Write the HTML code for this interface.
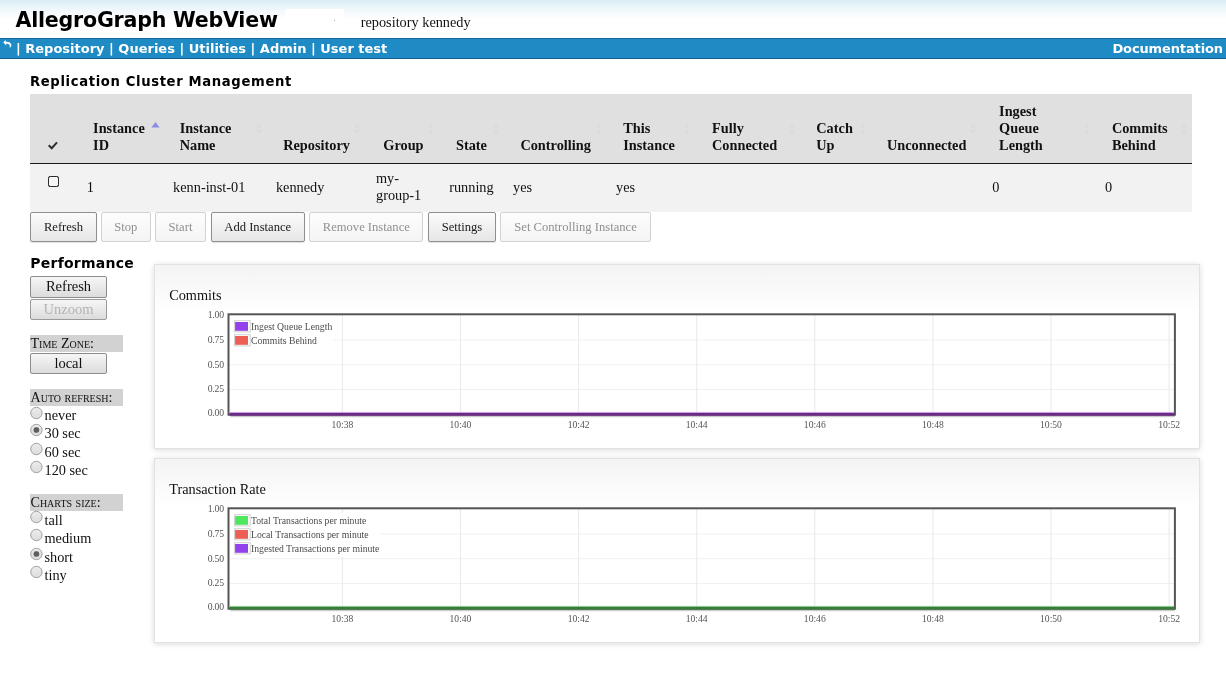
<!DOCTYPE html>
<html>
<head>
<meta charset="utf-8">
<title>AllegroGraph WebView</title>
<style>
html,body{margin:0;padding:0;}
body{width:1226px;height:680px;overflow:hidden;background:#fff;position:relative;font-family:"Liberation Serif","DejaVu Serif",serif;color:#111;}
div,span{box-sizing:border-box;}
.t{position:absolute;white-space:nowrap;}
#wrap{position:absolute;left:0;top:0;width:1226px;height:680px;will-change:transform;}
.a{position:absolute;}
.sn{font-family:"DejaVu Sans","Liberation Sans",sans-serif;}
#hdr{left:0;top:0;width:1226px;height:38px;background:linear-gradient(#d9ecf5 0,#f0f7fb 9px,#fff 20px);}
#nav{left:0;top:38px;width:1226px;height:21px;background:#1f8bc4;border-top:1px solid #17699c;border-bottom:1px solid #165f90;}
#thead{left:30px;top:94px;width:1162px;height:69px;background:#e0e0e0;}
#tline{left:30px;top:163px;width:1162px;height:1px;background:#1a1a1a;}
#trow{left:30px;top:164px;width:1162px;height:48px;background:#f2f2f2;}
.btn{position:absolute;height:30px;top:212px;border:1px solid #8f8f8f;border-radius:2px;background:linear-gradient(#fbfbfb,#e6e6e6);font-size:12.6px;line-height:28px;text-align:center;color:#1a1a1a;white-space:nowrap;box-shadow:0 1px 1px rgba(0,0,0,.12);}
.btn.dis{border-color:#d2d2d2;color:#909090;background:linear-gradient(#fdfdfd,#f4f4f4);box-shadow:none;}
.pbtn{position:absolute;left:30px;width:77px;height:21px;border:1px solid #8c8c8c;border-radius:2px;background:linear-gradient(#f6f6f6,#dcdcdc);font-size:14.5px;line-height:19px;text-align:center;color:#111;white-space:nowrap;}
.pbtn.dis{color:#b4b4b4;border-color:#9a9a9a;}
.lab{position:absolute;left:30px;width:93px;height:16.5px;background:#d2d2d2;}
.rad{position:absolute;left:30px;width:13px;height:13px;border:1px solid #a0a0a0;border-radius:50%;background:radial-gradient(circle at 50% 25%,#fbfbfb 0,#e6e6e6 50%,#d6d6d6 100%);}
.rad.on::after{content:"";position:absolute;left:2.5px;top:2.5px;width:6px;height:6px;border-radius:50%;background:#5c5c5c;}
.panel{position:absolute;left:154px;width:1046px;height:185px;border:1px solid #e2e2e2;background:linear-gradient(#f4f4f4 0,#fff 48px);box-shadow:0 1px 6px rgba(0,0,0,.15);}
svg{position:absolute;left:0;top:0;overflow:visible;}
</style>
</head>
<body>
<div id="wrap">
<div id="hdr" class="a"></div>
<svg class="a" width="0" height="0"><defs><linearGradient id="rg" x1="0" y1="0" x2="0" y2="1"><stop offset="0" stop-color="#ececec"/><stop offset="1" stop-color="#dcdcdc"/></linearGradient></defs></svg>
<div class="a" style="left:285px;top:9px;width:59px;height:29px;background:#fff;"></div>
<div class="a" style="left:334px;top:20px;width:1px;height:1px;background:#9a9a9a;"></div>
<div class="t sn" style="top:7.70px;font-size:20.60px;line-height:24px;color:#000;left:15.50px;font-weight:bold;letter-spacing:-0.235px;">AllegroGraph WebView</div>
<div class="t" style="top:13.60px;font-size:14.30px;line-height:16px;color:#111;left:360.70px;">repository kennedy</div>
<div id="nav" class="a"></div>
<svg class="a" style="left:3px;top:40px;" width="10" height="10" viewBox="0 0 10 10"><path d="M0.3 2.6 L2.4 0.1 L2.8 1.7 C5.6 1.5 8.4 2.7 8.4 5 C8.4 6.3 7.5 7.5 6.4 8.1 C6.9 7 7 6 6.6 5.3 C6 4.1 4.6 3.7 3.1 3.8 L3.4 5.6 Z" fill="#fff"/></svg>
<div class="t sn" style="top:41.00px;font-size:13.00px;line-height:15px;color:#fff;left:16.00px;font-weight:bold;">| Repository | Queries | Utilities | Admin | User test</div>
<div class="t sn" style="top:41.00px;font-size:13.00px;line-height:15px;color:#fff;right:3.00px;font-weight:bold;letter-spacing:-0.12px;">Documentation</div>
<div class="t sn" style="top:74.40px;font-size:13.20px;line-height:15px;color:#000;left:30.00px;font-weight:bold;letter-spacing:0.63px;">Replication Cluster Management</div>
<div id="thead" class="a"></div><div id="tline" class="a"></div><div id="trow" class="a"></div>
<div class="t" style="top:119.70px;font-size:14.30px;line-height:16px;color:#111;left:93.10px;font-weight:bold;">Instance</div>
<div class="t" style="top:136.80px;font-size:14.30px;line-height:16px;color:#111;left:93.10px;font-weight:bold;">ID</div>
<div class="t" style="top:119.70px;font-size:14.30px;line-height:16px;color:#111;left:179.70px;font-weight:bold;">Instance</div>
<div class="t" style="top:136.80px;font-size:14.30px;line-height:16px;color:#111;left:179.70px;font-weight:bold;">Name</div>
<div class="t" style="top:136.80px;font-size:14.30px;line-height:16px;color:#111;left:283.20px;font-weight:bold;">Repository</div>
<div class="t" style="top:136.80px;font-size:14.30px;line-height:16px;color:#111;left:383.30px;font-weight:bold;">Group</div>
<div class="t" style="top:136.80px;font-size:14.30px;line-height:16px;color:#111;left:456.00px;font-weight:bold;">State</div>
<div class="t" style="top:136.80px;font-size:14.30px;line-height:16px;color:#111;left:520.40px;font-weight:bold;">Controlling</div>
<div class="t" style="top:119.70px;font-size:14.30px;line-height:16px;color:#111;left:623.20px;font-weight:bold;">This</div>
<div class="t" style="top:136.80px;font-size:14.30px;line-height:16px;color:#111;left:623.20px;font-weight:bold;">Instance</div>
<div class="t" style="top:119.70px;font-size:14.30px;line-height:16px;color:#111;left:712.00px;font-weight:bold;">Fully</div>
<div class="t" style="top:136.80px;font-size:14.30px;line-height:16px;color:#111;left:712.00px;font-weight:bold;">Connected</div>
<div class="t" style="top:119.70px;font-size:14.30px;line-height:16px;color:#111;left:816.30px;font-weight:bold;">Catch</div>
<div class="t" style="top:136.80px;font-size:14.30px;line-height:16px;color:#111;left:816.30px;font-weight:bold;">Up</div>
<div class="t" style="top:136.80px;font-size:14.30px;line-height:16px;color:#111;left:887.00px;font-weight:bold;">Unconnected</div>
<div class="t" style="top:102.60px;font-size:14.30px;line-height:16px;color:#111;left:999.10px;font-weight:bold;">Ingest</div>
<div class="t" style="top:119.70px;font-size:14.30px;line-height:16px;color:#111;left:999.10px;font-weight:bold;">Queue</div>
<div class="t" style="top:136.80px;font-size:14.30px;line-height:16px;color:#111;left:999.10px;font-weight:bold;">Length</div>
<div class="t" style="top:119.70px;font-size:14.30px;line-height:16px;color:#111;left:1111.90px;font-weight:bold;">Commits</div>
<div class="t" style="top:136.80px;font-size:14.30px;line-height:16px;color:#111;left:1111.90px;font-weight:bold;">Behind</div>
<svg class="a" style="left:47px;top:141px;" width="12" height="10" viewBox="0 0 12 10"><path d="M1.7 4.2 L4.7 7.2 L10 1.4" fill="none" stroke="#2e2e2e" stroke-width="2"/></svg>
<svg class="a" style="left:151px;top:122px;" width="9" height="6" viewBox="0 0 9 6"><path d="M4.5 0 L8.6 5.6 L0.4 5.6 Z" fill="#8c8ce4"/></svg>
<svg class="a" style="left:255.8px;top:123px;" width="6" height="11" viewBox="0 0 6 11"><path d="M3 0 L6 4.4 L0 4.4 Z M3 11 L6 6.6 L0 6.6 Z" fill="#dbdbdb"/></svg>
<svg class="a" style="left:354.4px;top:123px;" width="6" height="11" viewBox="0 0 6 11"><path d="M3 0 L6 4.4 L0 4.4 Z M3 11 L6 6.6 L0 6.6 Z" fill="#dbdbdb"/></svg>
<svg class="a" style="left:427.8px;top:123px;" width="6" height="11" viewBox="0 0 6 11"><path d="M3 0 L6 4.4 L0 4.4 Z M3 11 L6 6.6 L0 6.6 Z" fill="#dbdbdb"/></svg>
<svg class="a" style="left:493.0px;top:123px;" width="6" height="11" viewBox="0 0 6 11"><path d="M3 0 L6 4.4 L0 4.4 Z M3 11 L6 6.6 L0 6.6 Z" fill="#dbdbdb"/></svg>
<svg class="a" style="left:596.0px;top:123px;" width="6" height="11" viewBox="0 0 6 11"><path d="M3 0 L6 4.4 L0 4.4 Z M3 11 L6 6.6 L0 6.6 Z" fill="#dbdbdb"/></svg>
<svg class="a" style="left:683.9px;top:123px;" width="6" height="11" viewBox="0 0 6 11"><path d="M3 0 L6 4.4 L0 4.4 Z M3 11 L6 6.6 L0 6.6 Z" fill="#dbdbdb"/></svg>
<svg class="a" style="left:788.6px;top:123px;" width="6" height="11" viewBox="0 0 6 11"><path d="M3 0 L6 4.4 L0 4.4 Z M3 11 L6 6.6 L0 6.6 Z" fill="#dbdbdb"/></svg>
<svg class="a" style="left:860.0px;top:123px;" width="6" height="11" viewBox="0 0 6 11"><path d="M3 0 L6 4.4 L0 4.4 Z M3 11 L6 6.6 L0 6.6 Z" fill="#dbdbdb"/></svg>
<svg class="a" style="left:970.4px;top:123px;" width="6" height="11" viewBox="0 0 6 11"><path d="M3 0 L6 4.4 L0 4.4 Z M3 11 L6 6.6 L0 6.6 Z" fill="#dbdbdb"/></svg>
<svg class="a" style="left:1084.0px;top:123px;" width="6" height="11" viewBox="0 0 6 11"><path d="M3 0 L6 4.4 L0 4.4 Z M3 11 L6 6.6 L0 6.6 Z" fill="#dbdbdb"/></svg>
<svg class="a" style="left:1180.8px;top:123px;" width="6" height="11" viewBox="0 0 6 11"><path d="M3 0 L6 4.4 L0 4.4 Z M3 11 L6 6.6 L0 6.6 Z" fill="#dbdbdb"/></svg>
<div class="a" style="left:48px;top:176px;width:11px;height:11px;border:1px solid #2a2a2a;border-radius:2.5px;background:#f6f6f6;box-shadow:0 0 0.5px #2a2a2a;"></div>
<div class="t" style="top:178.90px;font-size:14.30px;line-height:16px;color:#111;left:86.80px;">1</div>
<div class="t" style="top:178.90px;font-size:14.30px;line-height:16px;color:#111;left:173.10px;">kenn-inst-01</div>
<div class="t" style="top:178.90px;font-size:14.30px;line-height:16px;color:#111;left:275.90px;">kennedy</div>
<div class="t" style="top:170.30px;font-size:14.30px;line-height:16px;color:#111;left:376.00px;">my-</div>
<div class="t" style="top:186.70px;font-size:14.30px;line-height:16px;color:#111;left:376.00px;">group-1</div>
<div class="t" style="top:178.90px;font-size:14.30px;line-height:16px;color:#111;left:449.20px;">running</div>
<div class="t" style="top:178.90px;font-size:14.30px;line-height:16px;color:#111;left:513.00px;">yes</div>
<div class="t" style="top:178.90px;font-size:14.30px;line-height:16px;color:#111;left:616.10px;">yes</div>
<div class="t" style="top:178.90px;font-size:14.30px;line-height:16px;color:#111;left:992.20px;">0</div>
<div class="t" style="top:178.90px;font-size:14.30px;line-height:16px;color:#111;left:1105.00px;">0</div>
<div class="btn" style="left:30.0px;width:67.0px;">Refresh</div>
<div class="btn dis" style="left:101.0px;width:49.5px;">Stop</div>
<div class="btn dis" style="left:155.0px;width:51.0px;">Start</div>
<div class="btn" style="left:211.0px;width:93.5px;">Add Instance</div>
<div class="btn dis" style="left:309.3px;width:114.0px;">Remove Instance</div>
<div class="btn" style="left:428.3px;width:67.3px;">Settings</div>
<div class="btn dis" style="left:500.2px;width:150.7px;">Set Controlling Instance</div>
<div class="t sn" style="top:255.20px;font-size:14.00px;line-height:16px;color:#000;left:30.30px;font-weight:bold;letter-spacing:0.23px;">Performance</div>
<div class="pbtn" style="top:276px;height:22px;line-height:19px;">Refresh</div>
<div class="pbtn dis" style="top:299px;">Unzoom</div>
<div class="lab" style="top:335.3px;"></div>
<div class="t" style="top:334.90px;font-size:14.10px;line-height:16px;color:#111;left:30.50px;font-variant:small-caps;">Time Zone:</div>
<div class="pbtn" style="top:353px;">local</div>
<div class="lab" style="top:389.2px;"></div>
<div class="t" style="top:389.40px;font-size:14.10px;line-height:16px;color:#111;left:30.50px;font-variant:small-caps;">Auto refresh:</div>
<svg class="a" width="16" height="16" viewBox="0 0 16 16" style="left:28px;top:404.50px;"><circle cx="8.4" cy="8" r="5.7" fill="url(#rg)" stroke="#a0a0a0" stroke-width="1"/></svg>
<div class="t" style="top:406.60px;font-size:14.30px;line-height:16px;color:#111;left:44.50px;">never</div>
<svg class="a" width="16" height="16" viewBox="0 0 16 16" style="left:28px;top:422.30px;"><circle cx="8.4" cy="8" r="5.7" fill="url(#rg)" stroke="#a0a0a0" stroke-width="1"/><rect x="5.6" y="5.3" width="5.6" height="5.4" rx="2.2" fill="#5e5e5e"/></svg>
<div class="t" style="top:424.70px;font-size:14.30px;line-height:16px;color:#111;left:44.50px;">30 sec</div>
<svg class="a" width="16" height="16" viewBox="0 0 16 16" style="left:28px;top:440.70px;"><circle cx="8.4" cy="8" r="5.7" fill="url(#rg)" stroke="#a0a0a0" stroke-width="1"/></svg>
<div class="t" style="top:443.80px;font-size:14.30px;line-height:16px;color:#111;left:44.50px;">60 sec</div>
<svg class="a" width="16" height="16" viewBox="0 0 16 16" style="left:28px;top:458.90px;"><circle cx="8.4" cy="8" r="5.7" fill="url(#rg)" stroke="#a0a0a0" stroke-width="1"/></svg>
<div class="t" style="top:461.80px;font-size:14.30px;line-height:16px;color:#111;left:44.50px;">120 sec</div>
<div class="lab" style="top:494.1px;"></div>
<div class="t" style="top:494.30px;font-size:14.10px;line-height:16px;color:#111;left:30.50px;font-variant:small-caps;">Charts size:</div>
<svg class="a" width="16" height="16" viewBox="0 0 16 16" style="left:28px;top:509.40px;"><circle cx="8.4" cy="8" r="5.7" fill="url(#rg)" stroke="#a0a0a0" stroke-width="1"/></svg>
<div class="t" style="top:511.50px;font-size:14.30px;line-height:16px;color:#111;left:44.50px;">tall</div>
<svg class="a" width="16" height="16" viewBox="0 0 16 16" style="left:28px;top:527.20px;"><circle cx="8.4" cy="8" r="5.7" fill="url(#rg)" stroke="#a0a0a0" stroke-width="1"/></svg>
<div class="t" style="top:529.60px;font-size:14.30px;line-height:16px;color:#111;left:44.50px;">medium</div>
<svg class="a" width="16" height="16" viewBox="0 0 16 16" style="left:28px;top:545.60px;"><circle cx="8.4" cy="8" r="5.7" fill="url(#rg)" stroke="#a0a0a0" stroke-width="1"/><rect x="5.6" y="5.3" width="5.6" height="5.4" rx="2.2" fill="#5e5e5e"/></svg>
<div class="t" style="top:548.70px;font-size:14.30px;line-height:16px;color:#111;left:44.50px;">short</div>
<svg class="a" width="16" height="16" viewBox="0 0 16 16" style="left:28px;top:563.80px;"><circle cx="8.4" cy="8" r="5.7" fill="url(#rg)" stroke="#a0a0a0" stroke-width="1"/></svg>
<div class="t" style="top:566.70px;font-size:14.30px;line-height:16px;color:#111;left:44.50px;">tiny</div>
<div class="panel" style="top:264px;"></div>
<div class="t" style="top:287.00px;font-size:14.30px;line-height:16px;color:#111;left:169.20px;">Commits</div>
<svg class="a" width="1226" height="680" viewBox="0 0 1226 680" style="left:0;top:0;"><rect x="227.5" y="313.3" width="948.4" height="102.4" fill="#fff"/><rect x="229.5" y="339.45" width="944.4" height="1" fill="#f0f0f0"/><rect x="229.5" y="364.20" width="944.4" height="1" fill="#f0f0f0"/><rect x="229.5" y="388.95" width="944.4" height="1" fill="#f0f0f0"/><rect x="341.90" y="315.3" width="1" height="98.4" fill="#e9e9e9"/><rect x="460.00" y="315.3" width="1" height="98.4" fill="#e9e9e9"/><rect x="578.10" y="315.3" width="1" height="98.4" fill="#e9e9e9"/><rect x="696.20" y="315.3" width="1" height="98.4" fill="#e9e9e9"/><rect x="814.30" y="315.3" width="1" height="98.4" fill="#e9e9e9"/><rect x="932.40" y="315.3" width="1" height="98.4" fill="#e9e9e9"/><rect x="1050.50" y="315.3" width="1" height="98.4" fill="#e9e9e9"/><rect x="1168.60" y="315.3" width="1" height="98.4" fill="#e9e9e9"/><rect x="231" y="318" width="103" height="31" fill="#fff" opacity="0.85"/><rect x="234.6" y="320.70" width="15.6" height="11.2" fill="#fff" stroke="#cfcfcf" stroke-width="1"/><rect x="235.1" y="322.00" width="12.9" height="8.8" fill="#9440ed"/><rect x="234.6" y="334.70" width="15.6" height="11.2" fill="#fff" stroke="#cfcfcf" stroke-width="1"/><rect x="235.1" y="336.00" width="12.9" height="8.8" fill="#ed5f55"/><rect x="230.5" y="415.7" width="944.4" height="1.5" fill="#a8a8a8" opacity="0.6"/><rect x="228.5" y="314.3" width="946.4" height="100.4" fill="none" stroke="#555" stroke-width="2"/><rect x="229.5" y="411.9" width="944.4" height="1" fill="#e9b8f7"/><rect x="229.5" y="412.8" width="944.9" height="2.9" fill="#6b2a88"/></svg>
<div class="t" style="top:308.80px;font-size:9.70px;line-height:11px;color:#545454;right:1002.00px;letter-spacing:-0.15px;">1.00</div>
<div class="t" style="top:333.70px;font-size:9.70px;line-height:11px;color:#545454;right:1002.00px;letter-spacing:-0.15px;">0.75</div>
<div class="t" style="top:358.50px;font-size:9.70px;line-height:11px;color:#545454;right:1002.00px;letter-spacing:-0.15px;">0.50</div>
<div class="t" style="top:383.00px;font-size:9.70px;line-height:11px;color:#545454;right:1002.00px;letter-spacing:-0.15px;">0.25</div>
<div class="t" style="top:407.30px;font-size:9.70px;line-height:11px;color:#545454;right:1002.00px;letter-spacing:-0.15px;">0.00</div>
<div class="t" style="top:418.80px;font-size:9.60px;line-height:11px;color:#545454;left:242.40px;width:200px;text-align:center;">10:38</div>
<div class="t" style="top:418.80px;font-size:9.60px;line-height:11px;color:#545454;left:360.50px;width:200px;text-align:center;">10:40</div>
<div class="t" style="top:418.80px;font-size:9.60px;line-height:11px;color:#545454;left:478.60px;width:200px;text-align:center;">10:42</div>
<div class="t" style="top:418.80px;font-size:9.60px;line-height:11px;color:#545454;left:596.70px;width:200px;text-align:center;">10:44</div>
<div class="t" style="top:418.80px;font-size:9.60px;line-height:11px;color:#545454;left:714.80px;width:200px;text-align:center;">10:46</div>
<div class="t" style="top:418.80px;font-size:9.60px;line-height:11px;color:#545454;left:832.90px;width:200px;text-align:center;">10:48</div>
<div class="t" style="top:418.80px;font-size:9.60px;line-height:11px;color:#545454;left:951.00px;width:200px;text-align:center;">10:50</div>
<div class="t" style="top:418.80px;font-size:9.60px;line-height:11px;color:#545454;left:1069.10px;width:200px;text-align:center;">10:52</div>
<div class="t" style="top:320.80px;font-size:9.70px;line-height:11px;color:#4c4c4c;left:251.00px;">Ingest Queue Length</div>
<div class="t" style="top:334.80px;font-size:9.70px;line-height:11px;color:#4c4c4c;left:251.00px;">Commits Behind</div>
<div class="panel" style="top:458px;"></div>
<div class="t" style="top:481.00px;font-size:14.30px;line-height:16px;color:#111;left:169.20px;">Transaction Rate</div>
<svg class="a" width="1226" height="680" viewBox="0 0 1226 680" style="left:0;top:0;"><rect x="227.5" y="507.3" width="948.4" height="102.4" fill="#fff"/><rect x="229.5" y="533.45" width="944.4" height="1" fill="#f0f0f0"/><rect x="229.5" y="558.20" width="944.4" height="1" fill="#f0f0f0"/><rect x="229.5" y="582.95" width="944.4" height="1" fill="#f0f0f0"/><rect x="341.90" y="509.3" width="1" height="98.4" fill="#e9e9e9"/><rect x="460.00" y="509.3" width="1" height="98.4" fill="#e9e9e9"/><rect x="578.10" y="509.3" width="1" height="98.4" fill="#e9e9e9"/><rect x="696.20" y="509.3" width="1" height="98.4" fill="#e9e9e9"/><rect x="814.30" y="509.3" width="1" height="98.4" fill="#e9e9e9"/><rect x="932.40" y="509.3" width="1" height="98.4" fill="#e9e9e9"/><rect x="1050.50" y="509.3" width="1" height="98.4" fill="#e9e9e9"/><rect x="1168.60" y="509.3" width="1" height="98.4" fill="#e9e9e9"/><rect x="231" y="512" width="149" height="45" fill="#fff" opacity="0.85"/><rect x="234.6" y="514.70" width="15.6" height="11.2" fill="#fff" stroke="#cfcfcf" stroke-width="1"/><rect x="235.1" y="516.00" width="12.9" height="8.8" fill="#4de85e"/><rect x="234.6" y="528.70" width="15.6" height="11.2" fill="#fff" stroke="#cfcfcf" stroke-width="1"/><rect x="235.1" y="530.00" width="12.9" height="8.8" fill="#ed5f55"/><rect x="234.6" y="542.70" width="15.6" height="11.2" fill="#fff" stroke="#cfcfcf" stroke-width="1"/><rect x="235.1" y="544.00" width="12.9" height="8.8" fill="#9440ed"/><rect x="230.5" y="609.7" width="944.4" height="1.5" fill="#a8a8a8" opacity="0.6"/><rect x="228.5" y="508.3" width="946.4" height="100.4" fill="none" stroke="#555" stroke-width="2"/><rect x="229.5" y="605.9" width="944.4" height="1" fill="#8fe08f"/><rect x="229.5" y="606.8" width="944.9" height="2.9" fill="#3a7a3c"/></svg>
<div class="t" style="top:502.80px;font-size:9.70px;line-height:11px;color:#545454;right:1002.00px;letter-spacing:-0.15px;">1.00</div>
<div class="t" style="top:527.70px;font-size:9.70px;line-height:11px;color:#545454;right:1002.00px;letter-spacing:-0.15px;">0.75</div>
<div class="t" style="top:552.50px;font-size:9.70px;line-height:11px;color:#545454;right:1002.00px;letter-spacing:-0.15px;">0.50</div>
<div class="t" style="top:577.00px;font-size:9.70px;line-height:11px;color:#545454;right:1002.00px;letter-spacing:-0.15px;">0.25</div>
<div class="t" style="top:601.30px;font-size:9.70px;line-height:11px;color:#545454;right:1002.00px;letter-spacing:-0.15px;">0.00</div>
<div class="t" style="top:612.80px;font-size:9.60px;line-height:11px;color:#545454;left:242.40px;width:200px;text-align:center;">10:38</div>
<div class="t" style="top:612.80px;font-size:9.60px;line-height:11px;color:#545454;left:360.50px;width:200px;text-align:center;">10:40</div>
<div class="t" style="top:612.80px;font-size:9.60px;line-height:11px;color:#545454;left:478.60px;width:200px;text-align:center;">10:42</div>
<div class="t" style="top:612.80px;font-size:9.60px;line-height:11px;color:#545454;left:596.70px;width:200px;text-align:center;">10:44</div>
<div class="t" style="top:612.80px;font-size:9.60px;line-height:11px;color:#545454;left:714.80px;width:200px;text-align:center;">10:46</div>
<div class="t" style="top:612.80px;font-size:9.60px;line-height:11px;color:#545454;left:832.90px;width:200px;text-align:center;">10:48</div>
<div class="t" style="top:612.80px;font-size:9.60px;line-height:11px;color:#545454;left:951.00px;width:200px;text-align:center;">10:50</div>
<div class="t" style="top:612.80px;font-size:9.60px;line-height:11px;color:#545454;left:1069.10px;width:200px;text-align:center;">10:52</div>
<div class="t" style="top:514.80px;font-size:9.70px;line-height:11px;color:#4c4c4c;left:251.00px;">Total Transactions per minute</div>
<div class="t" style="top:528.80px;font-size:9.70px;line-height:11px;color:#4c4c4c;left:251.00px;">Local Transactions per minute</div>
<div class="t" style="top:542.80px;font-size:9.70px;line-height:11px;color:#4c4c4c;left:251.00px;">Ingested Transactions per minute</div>
</div>
</body>
</html>
